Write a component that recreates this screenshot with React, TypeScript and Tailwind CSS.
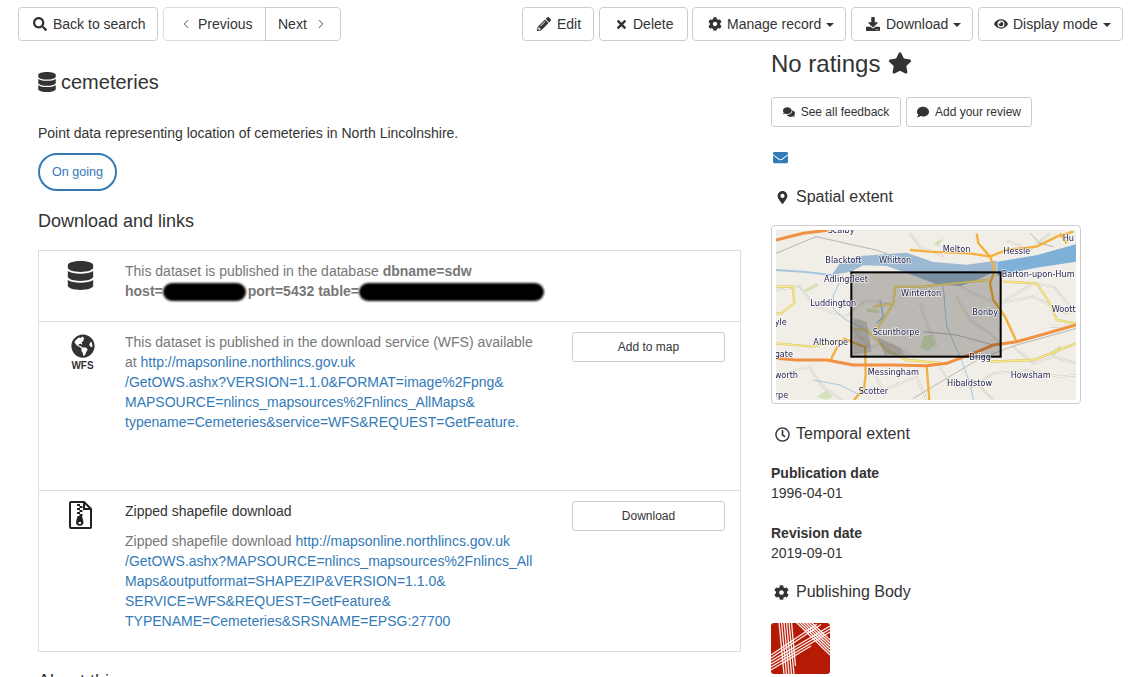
import React from "react";
import {
  FaSearch, FaPencilAlt, FaTimes, FaCog, FaDownload, FaEye, FaStar,
  FaComments, FaComment, FaEnvelope, FaMapMarkerAlt, FaRegClock, FaDatabase, FaGlobeAmericas,
} from "react-icons/fa";
import { ChevronLeft, ChevronRight } from "lucide-react";

const btn = "flex items-center h-[34px] border border-[#cccccc] rounded-[4px] bg-white text-[14px] text-[#333333]";

function Caret() {
  return <span className="inline-block align-[2px] ml-[5px] w-0 h-0 border-x-[4px] border-t-[4px] border-x-transparent border-t-[#333333]" />;
}

function Blob({ w }: { w: string }) {
  return <span className={`inline-block align-[-5px] h-[18px] rounded-full bg-black blur-[1.2px] ${w}`} />;
}

function MapLabel({ x, y, t }: { x: number; y: number; t: string }) {
  return (
    <text x={x} y={y} fontSize="24.5" fontFamily="DejaVu Sans, sans-serif" fill="#25254f" stroke="#ffffff" strokeWidth="5" strokeOpacity="0.7" style={{ paintOrder: "stroke" }}>
      {t}
    </text>
  );
}

const minor = [
  "M48 210l70-10 50 60 90 30 60-50 60 10",
  "M600 200l60 30 60 20 100-60 60 10 70 80",
  "M590 230l40 70 60 40 30 30",
  "M480 250l20 60 30 70",
  "M48 470l100-30 40 60 60 40",
  "M330 440l40 70 100-40 30 70",
  "M540 440l30 50 70 10 60-40 100-10 100 20 110-10",
  "M720 250l100-20 100 50 30-10",
  "M760 380l60 50 60-20 70 20",
  "M450 40l30 40 70 30",
  "M740 60l70 30 60-50",
  "M270 320l60 60 60-10 70 40",
  "M640 480l60 60",
  "M870 320l40 0 40-10",
];
const yellow = [
  "M48 370l110 10 90-20",
  "M350 330l50-80 5-50 80 0 100-10 100-10",
  "M270 325l50 5 60 60 60 30 120 10",
  "M690 425l130-5 130-50",
  "M730 185l100 5 40 60 20 50 58 10",
  "M48 200l50 0 5 50-40 30-15 0",
  "M340 260l60-10",
];

function MapPic() {
  return (
    <svg viewBox="48 30 900 510" className="block w-[300px] h-[170px] blur-[0.5px]">
      <rect x="48" y="30" width="900" height="510" fill="#f1eee8" />
      <g fill="#d3e2bb">
        <path d="M130 210l40-20 5 8-35 18z" />
        <path d="M320 265l40 5-5 10-35-5z" />
        <path d="M490 350l30-8 10 26-25 25-25-10z" />
        <path d="M870 400l30-25 5 10-25 25z" />
        <path d="M170 530l30-20 20 20-20 10z" />
        <path d="M520 70l30-15-15 25z" />
      </g>
      <g fill="none" stroke="#cdc8ba" strokeWidth="6">
        {minor.map((d) => <path key={d} d={d} />)}
      </g>
      <g fill="none" stroke="#faf9f5" strokeWidth="3">
        {minor.map((d) => <path key={d} d={d} />)}
      </g>
      <g fill="none" stroke="#9a9a9a" strokeWidth="2">
        <path d="M48 100l120-50 180 40 140 50" />
        <path d="M460 535l200-120 110-40 180-50" />
        <path d="M490 335l100 10 110 30" />
        <path d="M810 40l30 30 40 10" />
      </g>
      <g fill="none" stroke="#a6c6de" strokeWidth="3">
        <path d="M250 165l-30 60 0 40 30 30 60 30" />
        <path d="M550 200l10 120 40 90 30 80 10 50" />
        <path d="M48 150l90 6 80 10" strokeWidth="6" />
        <path d="M160 480l80 15 60 30" />
        <path d="M360 240l10 50-20 20" strokeWidth="5" />
      </g>
      <path d="M215 165l25-35 60-22 140-10 80 28 100 8 90-12 0 30-60 28-50 18-70-5-80-30-70-25-70-2-40 20z" fill="#9cb8d3" />
      <path d="M712 125l120-20 116-32 0 52-120 18-116 24z" fill="#7fb0d7" />
      <g fill="none" stroke="#d8c367" strokeWidth="7">
        {yellow.map((d) => <path key={d} d={d} />)}
      </g>
      <g fill="none" stroke="#f8e98a" strokeWidth="4">
        {yellow.map((d) => <path key={d} d={d} />)}
      </g>
      <g fill="none" stroke="#f3b03c" strokeWidth="7">
        <path d="M650 40l5 30 35 40 15 40-15 40 10 50 35 50 35 75" />
        <path d="M500 437l8 103" />
        <path d="M315 375l2 90-5 40-30 35" />
        <path d="M250 355l60 25" />
        <path d="M212 420l20-40" />
        <path d="M450 90l60 5 120 5 60 10 50-20 90-10 60-30 50-15" />
        <path d="M900 40l20 30" />
      </g>
      <g fill="none" stroke="#f19042" strokeWidth="9">
        <path d="M48 415l62 5 90 0 80 15 120 0 100 2 60-7 80-30 60-25 70-10 90-25 88-25" />
        <path d="M48 60l82-20 80-10" />
      </g>
      <rect x="274" y="157" width="448" height="253" fill="#000000" fillOpacity="0.22" stroke="#000000" strokeWidth="6" />
      <path d="M280 295l40 10 15 90-55 10z M350 350l70 35 15 20-60 0z" fill="#777470" fillOpacity="0.4" />
      <MapLabel x={203} y={39} t="Scalby" />
      <MapLabel x={548} y={95} t="Melton" />
      <MapLabel x={730} y={101} t="Hessle" />
      <MapLabel x={908} y={62} t="Hu" />
      <MapLabel x={196} y={130} t="Blacktoft" />
      <MapLabel x={357} y={129} t="Whitton" />
      <MapLabel x={192} y={185} t="Adlingfleet" />
      <MapLabel x={725} y={171} t="Barton-upon-Hum" />
      <MapLabel x={423} y={227} t="Winterton" />
      <MapLabel x={151} y={258} t="Luddington" />
      <MapLabel x={637} y={284} t="Bonby" />
      <MapLabel x={875} y={276} t="Wootto" />
      <MapLabel x={44} y={316} t="yle" />
      <MapLabel x={338} y={345} t="Scunthorpe" />
      <MapLabel x={160} y={375} t="Althorpe" />
      <MapLabel x={44} y={411} t="gate" />
      <MapLabel x={628} y={421} t="Brigg" />
      <MapLabel x={323} y={464} t="Messingham" />
      <MapLabel x={752} y={474} t="Howsham" />
      <MapLabel x={44} y={473} t="worth" />
      <MapLabel x={561} y={499} t="Hibaldstow" />
      <MapLabel x={296} y={523} t="Scotter" />
      <MapLabel x={44} y={534} t="rpe" />
    </svg>
  );
}

function Logo() {
  return (
    <svg viewBox="0 0 59 53" className="block w-[59px] h-[53px]">
      <rect x="0" y="2" width="59" height="51" rx="3" fill="#b51a04" />
      <g fill="none" stroke="#ffffff" strokeWidth="1.3" strokeOpacity="0.92">
        <path d="M8 1l5 52M10.5 1l5 52M13 1l5 52M15.5 1l5 52M18 1l5 52M20.5 1l4 44" />
        <path d="M0 34L46 3M0 37L50 3.5M0 40L59 5M0 43L59 8M0 46L59 11M0 49L40 25" />
        <path d="M25 1l34 33M28 1l31 30M31 1l28 27M34 1l25 24M37 1l22 21M40 1l19 18" />
      </g>
    </svg>
  );
}

function ZipIcon() {
  return (
    <svg viewBox="0 0 24 28" className="block w-[24px] h-[28px]">
      <path d="M2 1h13l7 7v18a1 1 0 0 1-1 1H2a1 1 0 0 1-1-1V2a1 1 0 0 1 1-1z" fill="none" stroke="#222222" strokeWidth="2" />
      <path d="M15 1v7h7" fill="none" stroke="#222222" strokeWidth="2" />
      <path d="M8 3h3v2H8zM10.5 5h3v2h-3zM8 7h3v2H8zM10.5 9h3v2h-3zM8 11h3v2H8zM10.5 13h3v2h-3z" fill="#222222" />
      <path d="M8.5 15h4.5l1.5 6a3.6 3.6 0 1 1-7.5 0z" fill="#222222" />
      <rect x="9.5" y="21" width="2.5" height="1.8" fill="#ffffff" />
    </svg>
  );
}

function RowIcon({ children }: { children: React.ReactNode }) {
  return <div className="w-[85px] shrink-0 flex flex-col items-center text-[#333333]">{children}</div>;
}

const Link = ({ children }: { children: React.ReactNode }) => <span className="text-[#337ab7]">{children}</span>;

export default function App() {
  return (
    <div className="w-[1145px] h-[677px] overflow-hidden bg-white text-[14px] leading-[20px] text-[#333333] font-['Liberation_Sans',Arial,sans-serif]">
      <div className="flex justify-between pl-[18px] pr-[22px] pt-[7px]">
        <div className="flex gap-[5px]">
          <div className={`${btn} w-[140px] pl-[14px] gap-[6px]`}>
            <FaSearch className="text-[14px]" /> Back to search
          </div>
          <div className="flex">
            <div className={`${btn} w-[103px] pl-[15px] gap-[5px] rounded-r-none border-[#dddddd] text-[#8f8f8f]`}>
              <ChevronLeft size={14} strokeWidth={1.5} /> Previous
            </div>
            <div className={`${btn} w-[76px] -ml-px pl-[12px] gap-[7px] rounded-l-none`}>
              Next <ChevronRight size={14} strokeWidth={1.5} />
            </div>
          </div>
        </div>
        <div className="flex gap-[5px]">
          <div className={`${btn} w-[72px] pl-[14px] gap-[6px]`}><FaPencilAlt className="text-[14px]" /> Edit</div>
          <div className={`${btn} w-[89px] pl-[15px] gap-[5px]`}><FaTimes className="text-[13px]" /> Delete</div>
          <div className={`${btn} w-[154px] -ml-px pl-[15px] gap-[5px]`}><FaCog className="text-[14px]" /><span>Manage record<Caret /></span></div>
          <div className={`${btn} w-[122px] pl-[14px] gap-[6px]`}><FaDownload className="text-[14px]" /><span>Download<Caret /></span></div>
          <div className={`${btn} w-[145px] pl-[15px] gap-[5px]`}><FaEye className="text-[14px]" /><span>Display mode<Caret /></span></div>
        </div>
      </div>

      <div className="flex pl-[38px]">
        <div className="w-[703px] shrink-0 pt-[28px]">
          <h1 className="flex items-center gap-[4px] -ml-[1px] text-[20px] leading-[26px] h-[26px] font-normal">
            <FaDatabase className="text-[20px] text-[#333333]" />
            <span>cemeteries</span>
          </h1>
          <p className="mt-[28px]">Point data representing location of cemeteries in North Lincolnshire.</p>
          <div className="mt-[10px] w-[79px] h-[38px] rounded-[19px] border-2 border-[#337ab7] flex items-center justify-center text-[12.6px] text-[#337ab7]">
            On going
          </div>
          <h2 className="mt-[19px] text-[18px] leading-[22px] font-normal">Download and links</h2>
          <div className="mt-[18px] border border-[#dddddd]">
            <div className="flex h-[70px] pt-[10px] pl-[1px]">
              <RowIcon><FaDatabase className="text-[29px] mr-[4px]" /></RowIcon>
              <div className="text-[#777777] whitespace-nowrap">
                This dataset is published in the database <b>dbname=sdw</b>
                <br />
                <b>host=</b><Blob w="w-[83px]" /><b className="ml-[2px]">port=5432 table=</b><Blob w="w-[185px]" />
              </div>
            </div>
            <div className="flex h-[169px] pt-[10px] pl-[1px] border-t border-[#dddddd]">
              <RowIcon>
                <FaGlobeAmericas className="text-[24px] mt-[2px]" />
                <span className="text-[10px] leading-[12px] font-bold mt-[2px]">WFS</span>
              </RowIcon>
              <div className="w-[447px] shrink-0 text-[#777777] whitespace-nowrap">
                This dataset is published in the download service (WFS) available
                <br />
                at <Link>http://mapsonline.northlincs.gov.uk</Link>
                <br />
                <Link>/GetOWS.ashx?VERSION=1.1.0&amp;FORMAT=image%2Fpng&amp;</Link>
                <br />
                <Link>MAPSOURCE=nlincs_mapsources%2Fnlincs_AllMaps&amp;</Link>
                <br />
                <Link>typename=Cemeteries&amp;service=WFS&amp;REQUEST=GetFeature.</Link>
              </div>
              <div className="w-[153px] h-[30px] rounded-[3px] border border-[#cccccc] flex items-center justify-center text-[12px]">Add to map</div>
            </div>
            <div className="flex h-[161px] pt-[10px] pl-[1px] border-t border-[#dddddd]">
              <RowIcon><div className="mr-[3px]"><ZipIcon /></div></RowIcon>
              <div className="w-[447px] shrink-0 whitespace-nowrap">
                <div>Zipped shapefile download</div>
                <div className="mt-[10px] text-[#777777]">
                  Zipped shapefile download <Link>http://mapsonline.northlincs.gov.uk</Link>
                  <br />
                  <Link>/GetOWS.ashx?MAPSOURCE=nlincs_mapsources%2Fnlincs_All</Link>
                  <br />
                  <Link>Maps&amp;outputformat=SHAPEZIP&amp;VERSION=1.1.0&amp;</Link>
                  <br />
                  <Link>SERVICE=WFS&amp;REQUEST=GetFeature&amp;</Link>
                  <br />
                  <Link>TYPENAME=Cemeteries&amp;SRSNAME=EPSG:27700</Link>
                </div>
              </div>
              <div className="w-[153px] h-[30px] rounded-[3px] border border-[#cccccc] flex items-center justify-center text-[12px]">Download</div>
            </div>
          </div>
          <h2 className="mt-[18px] text-[18px] leading-[22px] font-normal">About this resource</h2>
        </div>

        <div className="ml-[30px] w-[330px] shrink-0">
          <div className="flex items-center gap-[8px] h-[34px] mt-[6px] text-[24px] leading-[34px]">
            No ratings <FaStar className="text-[24px] mb-[2px]" />
          </div>
          <div className="flex gap-[5px] mt-[16px]">
            <div className="flex items-center justify-center gap-[6px] w-[130px] h-[30px] rounded-[3px] border border-[#cccccc] text-[12px]">
              <FaComments className="text-[12px]" /> See all feedback
            </div>
            <div className="flex items-center justify-center gap-[6px] w-[126px] h-[30px] rounded-[3px] border border-[#cccccc] text-[12px]">
              <FaComment className="text-[12px]" /> Add your review
            </div>
          </div>
          <FaEnvelope className="mt-[23px] ml-[2px] text-[15px] text-[#337ab7]" />
          <div className="flex items-center gap-[7px] mt-[21px] ml-[5px] text-[16px] leading-[22px]">
            <FaMapMarkerAlt className="text-[13px]" /> Spatial extent
          </div>
          <div className="mt-[17px] w-[310px] h-[179px] p-[4px] rounded-[4px] border border-[#cccccc]">
            <MapPic />
          </div>
          <div className="flex items-center gap-[6px] mt-[19px] ml-[4px] text-[16px] leading-[22px]">
            <FaRegClock className="text-[15px]" /> Temporal extent
          </div>
          <div className="mt-[18px] font-bold">Publication date</div>
          <div>1996-04-01</div>
          <div className="mt-[20px] font-bold">Revision date</div>
          <div>2019-09-01</div>
          <div className="flex items-center gap-[7px] mt-[18px] ml-[3px] text-[16px] leading-[22px]">
            <FaCog className="text-[15px]" /> Publishing Body
          </div>
          <div className="mt-[18px]"><Logo /></div>
        </div>
      </div>
    </div>
  );
}
